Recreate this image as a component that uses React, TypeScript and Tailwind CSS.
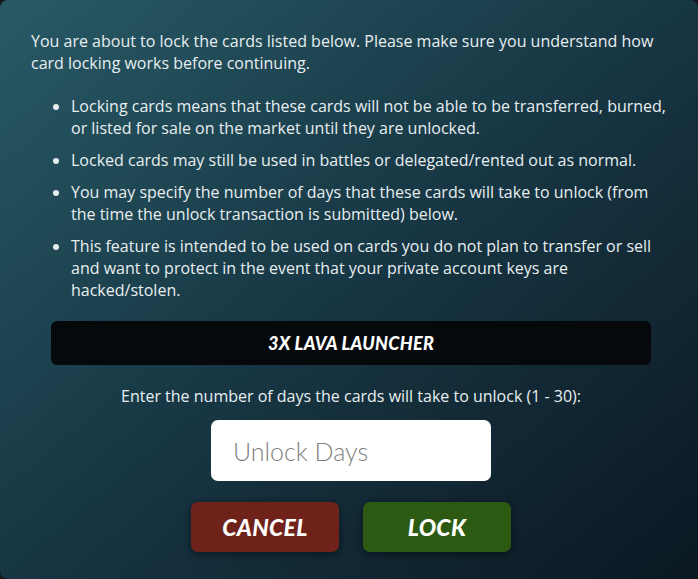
import React from "react";

export default function App() {
  const items = [
    "Locking cards means that these cards will not be able to be transferred, burned, or listed for sale on the market until they are unlocked.",
    "Locked cards may still be used in battles or delegated/rented out as normal.",
    "You may specify the number of days that these cards will take to unlock (from the time the unlock transaction is submitted) below.",
    "This feature is intended to be used on cards you do not plan to transfer or sell and want to protect in the event that your private account keys are hacked/stolen.",
  ];
  return (
    <div className="w-[698px] h-[579px] overflow-hidden bg-[#14181b]">
      <div className="w-full h-full rounded-[8px] bg-gradient-to-br from-[#285a66] via-[#173643] to-[#0b1822] pl-[31px] pr-[27px] pt-[30px] text-[#e8eef0] [font-family:'Open_Sans',sans-serif] text-[16px] leading-[22px]">
        <p>
          You are about to lock the cards listed below. Please make sure you understand how card locking works before continuing.
        </p>
        <ul className="list-disc pl-[40px] mt-[21px] flex flex-col gap-[10px]">
          {items.map((t) => (
            <li key={t}>{t}</li>
          ))}
        </ul>
        <div className="mx-5 mt-[20px] h-[44px] rounded-[6px] bg-[#05090b] flex items-center justify-center">
          <span className="[font-family:Lato,sans-serif] font-black italic text-[18px] uppercase text-white tracking-[0.3px]">
            3x Lava Launcher
          </span>
        </div>
        <p className="mt-[20px] text-center">Enter the number of days the cards will take to unlock (1 - 30):</p>
        <div className="flex justify-center mt-[13px]">
          <input
            placeholder="Unlock Days"
            className="w-[280px] h-[61px] rounded-[7px] bg-white px-[22px] text-[25px] [font-family:Lato,sans-serif] font-light text-[#333] placeholder:text-[#7f7f7f] outline-none"
          />
        </div>
        <div className="flex justify-center gap-[24px] mt-[21px]">
          <button className="w-[148px] h-[50px] rounded-[7px] bg-[#6e2219] text-white [font-family:Lato,sans-serif] font-black italic text-[23px] uppercase tracking-[0.3px] shadow-[0_2px_8px_rgba(0,0,0,0.5)]">
            Cancel
          </button>
          <button className="w-[148px] h-[50px] rounded-[7px] bg-[#2c5a12] text-white [font-family:Lato,sans-serif] font-black italic text-[23px] uppercase tracking-[0.3px] shadow-[0_2px_8px_rgba(0,0,0,0.5)]">
            Lock
          </button>
        </div>
      </div>
    </div>
  );
}
